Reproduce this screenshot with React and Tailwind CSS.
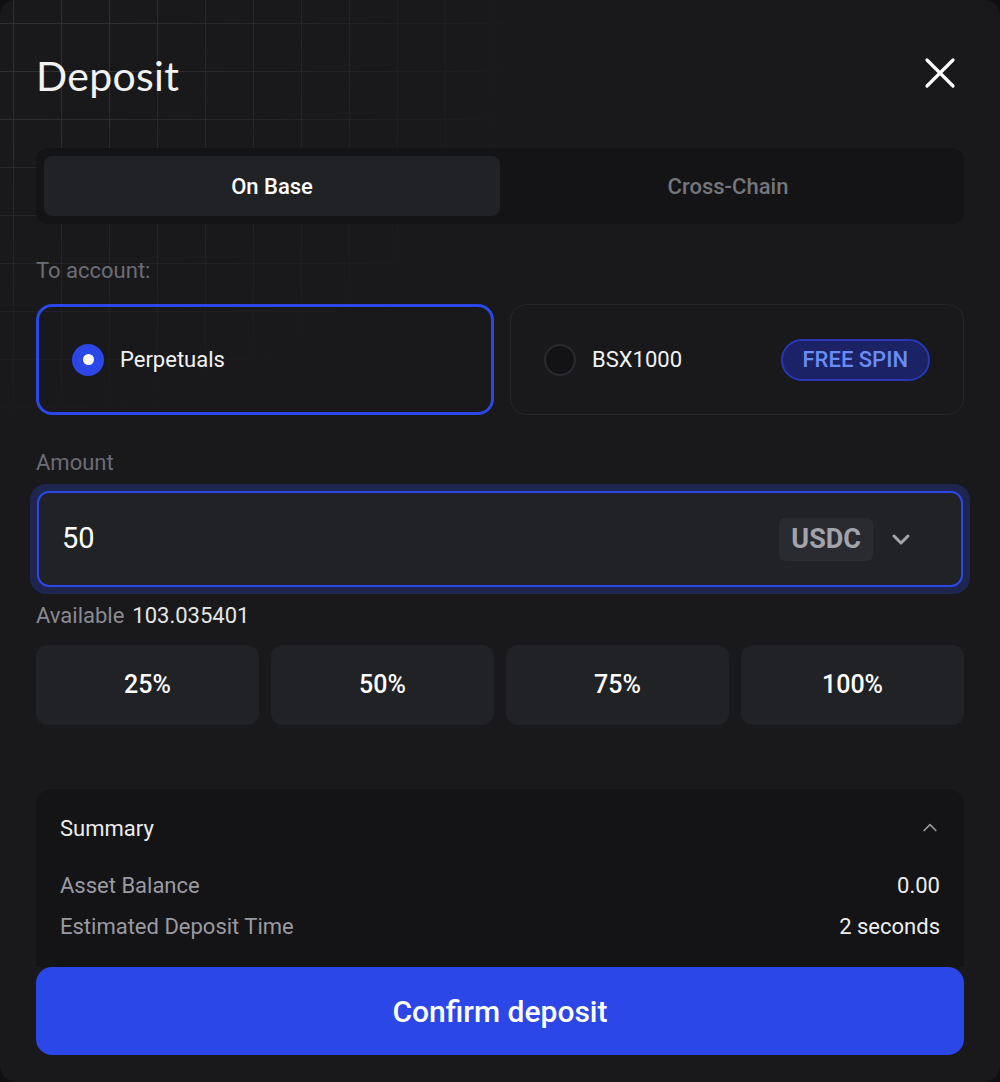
import { useState } from 'react';

const percents = ['25%', '50%', '75%', '100%'];

function Radio({ checked }) {
  return checked ? (
    <span className="flex h-8 w-8 items-center justify-center rounded-full bg-[#2b47e8]">
      <span className="h-[11px] w-[11px] rounded-full bg-white" />
    </span>
  ) : (
    <span className="h-8 w-8 rounded-full border-2 border-[#2a2a2f] bg-[#131315]" />
  );
}

export default function App() {
  const [tab, setTab] = useState('base');
  const [account, setAccount] = useState('perp');
  const [amount, setAmount] = useState('50');

  return (
    <div className="min-h-screen bg-[#101012]" style={{ fontFamily: 'Roboto, "Liberation Sans", sans-serif' }}>
      <div className="relative h-[1082px] w-[1000px] overflow-hidden rounded-2xl bg-[#19191c]">
        {/* grid decoration */}
        <div className="pointer-events-none absolute left-0 top-0 h-[440px] w-[540px] bg-[linear-gradient(to_right,#2e2e35_1px,transparent_1px),linear-gradient(to_bottom,#2e2e35_1px,transparent_1px)] bg-[size:48px_48px] bg-[position:13px_23px] [mask-image:radial-gradient(ellipse_at_top_left,black_15%,transparent_72%)]" />

        <div className="relative flex flex-col px-9">
          <div className="flex items-center justify-between pt-[52px]">
            <h1 className="text-[41px] leading-[48px] text-[#f2f2f2]" style={{ fontFamily: 'Lato, "Open Sans", sans-serif', letterSpacing: '0.3px' }}>
              Deposit
            </h1>
            <button className="-mt-[6px] mr-[8px] text-white">
              <svg width="32" height="32" viewBox="0 0 32 32" fill="none" stroke="currentColor" strokeWidth="3.2" strokeLinecap="round">
                <path d="M3 3L29 29M29 3L3 29" />
              </svg>
            </button>
          </div>

          <div className="mt-[48px] flex rounded-xl bg-[#141416] p-2">
            <button
              onClick={() => setTab('base')}
              className={`h-[60px] flex-1 rounded-lg text-[22px] font-medium ${tab === 'base' ? 'bg-[#212226] text-white' : 'text-[#75757c]'}`}
            >
              On Base
            </button>
            <button
              onClick={() => setTab('cross')}
              className={`h-[60px] flex-1 rounded-lg text-[22px] font-medium ${tab === 'cross' ? 'bg-[#212226] text-white' : 'text-[#75757c]'}`}
            >
              Cross-Chain
            </button>
          </div>

          <p className="mt-[33px] text-[22px] leading-[28px] text-[#6c6c73]">To account:</p>

          <div className="mt-[19px] grid grid-cols-[458px_1fr] gap-4">
            <button
              onClick={() => setAccount('perp')}
              className={`flex h-[111px] items-center gap-4 rounded-2xl px-[33px] text-left ${account === 'perp' ? 'border-[3px] border-[#2b47e8]' : 'border border-[#2a2a2e]'}`}
            >
              <Radio checked={account === 'perp'} />
              <span className="text-[22px] text-[#f2f2f2]">Perpetuals</span>
            </button>
            <button
              onClick={() => setAccount('bsx')}
              className={`flex h-[111px] items-center gap-4 rounded-2xl text-left ${account === 'bsx' ? 'border-[3px] border-[#2b47e8] px-[31px]' : 'border border-[#26262a] px-[33px]'}`}
            >
              <Radio checked={account === 'bsx'} />
              <span className="text-[22px] text-[#f2f2f2]">BSX1000</span>
              <span className="ml-auto flex h-[42px] items-center rounded-full border-2 border-[#2638b8] bg-[#1b2265] px-[20px] text-[22px] font-medium text-[#6a8cf5]">
                FREE SPIN
              </span>
            </button>
          </div>

          <p className="mt-[34px] text-[22px] leading-[28px] text-[#6c6c73]">Amount</p>

          <div className="-mx-[6px] mt-[7px] rounded-2xl bg-[#1e2650] p-[7px]">
            <div className="flex h-[96px] items-center rounded-xl border-2 border-[#2b47e8] bg-[#212226] pl-[23px] pr-[48px]">
              <input
                value={amount}
                onChange={(e) => setAmount(e.target.value)}
                className="min-w-0 flex-1 bg-transparent text-[29px] text-white outline-none"
              />
              <span className="flex h-[43px] items-center rounded-md bg-[#2a2b30] px-3 text-[27px] font-bold text-[#a3a3aa]">USDC</span>
              <svg className="ml-[16px]" width="24" height="24" viewBox="0 0 24 24" fill="none" stroke="#a3a3aa" strokeWidth="3" strokeLinecap="round" strokeLinejoin="round">
                <path d="M5 9l7 7 7-7" />
              </svg>
            </div>
          </div>

          <p className="mt-[8px] flex gap-2 text-[22px] leading-[28px]">
            <span className="text-[#8a8a91]">Available</span>
            <span className="text-[#e6e6e6]">103.035401</span>
          </p>

          <div className="mt-[15px] grid grid-cols-4 gap-3">
            {percents.map((p) => (
              <button key={p} className="h-[80px] rounded-xl bg-[#212226] text-[25px] font-medium text-white">
                {p}
              </button>
            ))}
          </div>

          <div className="mt-[64px] h-[178px] rounded-t-2xl bg-[#141416] px-6 pt-[25px]">
            <div className="flex h-[28px] items-center justify-between">
              <span className="text-[22px] text-[#ededed]">Summary</span>
              <svg width="20" height="20" viewBox="0 0 24 24" fill="none" stroke="#9a9aa1" strokeWidth="2" strokeLinecap="round" strokeLinejoin="round">
                <path d="M5 15l7-7 7 7" />
              </svg>
            </div>
            <div className="mt-[29px] flex h-[28px] items-center justify-between text-[22px]">
              <span className="text-[#9a9aa1]">Asset Balance</span>
              <span className="text-[#ededed]">0.00</span>
            </div>
            <div className="mt-[13px] flex h-[28px] items-center justify-between text-[22px]">
              <span className="text-[#9a9aa1]">Estimated Deposit Time</span>
              <span className="text-[#ededed]">2 seconds</span>
            </div>
          </div>

          <button className="h-[88px] rounded-2xl bg-[#2b47e8] text-[30px] font-medium text-white">
            Confirm deposit
          </button>
        </div>
      </div>
    </div>
  );
}
